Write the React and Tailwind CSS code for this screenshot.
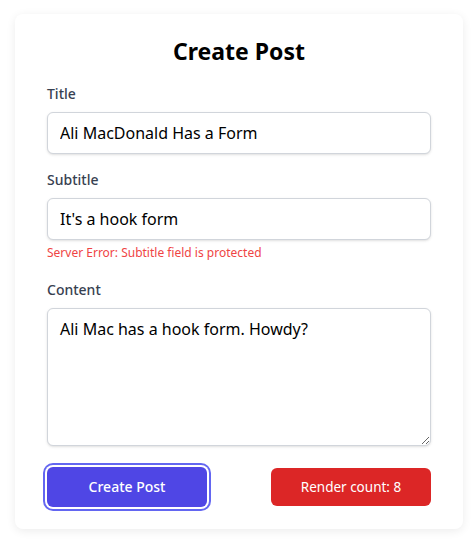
import { useState } from "react";

function Field({ label, children, error }) {
  return (
    <div className="mb-4">
      <label className="mb-2 block text-sm font-medium text-[#374151]">
        {label}
      </label>
      {children}
      {error && <p className="mt-[5px] text-xs leading-4 text-[#ef4444]">{error}</p>}
    </div>
  );
}

const inputClass =
  "block w-full rounded-md border border-[#d1d5db] bg-white px-3 text-base text-black shadow-sm outline-none";

export default function App() {
  const [title, setTitle] = useState("Ali MacDonald Has a Form");
  const [subtitle, setSubtitle] = useState("It's a hook form");
  const [content, setContent] = useState("Ali Mac has a hook form. Howdy?");

  return (
    <div className="min-h-screen bg-white pt-[14px] pl-[15px] font-['Noto_Sans',sans-serif]">
      <div className="w-[448px] rounded-lg bg-white px-8 pt-[21px] pb-[22px] shadow-[0_2px_10px_rgba(0,0,0,0.08)]">
        <h1 className="mb-[17px] text-center text-[23px] leading-8 font-bold text-black">Create Post</h1>

        <form onSubmit={(e) => e.preventDefault()}>
          <Field label="Title">
            <input
              className={`${inputClass} h-[42px]`}
              value={title}
              onChange={(e) => setTitle(e.target.value)}
            />
          </Field>

          <Field label="Subtitle" error="Server Error: Subtitle field is protected">
            <input
              className={`${inputClass} h-[42px]`}
              value={subtitle}
              onChange={(e) => setSubtitle(e.target.value)}
            />
          </Field>

          <div className="pt-[3px]">
            <label className="mb-2 block text-sm font-medium text-[#374151]">Content</label>
            <textarea
              className={`${inputClass} h-[138px] py-2`}
              value={content}
              onChange={(e) => setContent(e.target.value)}
            />
          </div>

          <div className="mt-[21px] flex items-center justify-between">
            <button
              type="submit"
              className="h-10 w-40 rounded-md bg-[#4f46e5] text-sm font-medium text-white ring-2 ring-[#6366f1] ring-offset-2"
            >
              Create Post
            </button>
            <div className="flex h-[38px] w-40 items-center justify-center rounded-md bg-[#dc2626] text-[13.5px] text-white">
              Render count: 8
            </div>
          </div>
        </form>
      </div>
    </div>
  );
}
